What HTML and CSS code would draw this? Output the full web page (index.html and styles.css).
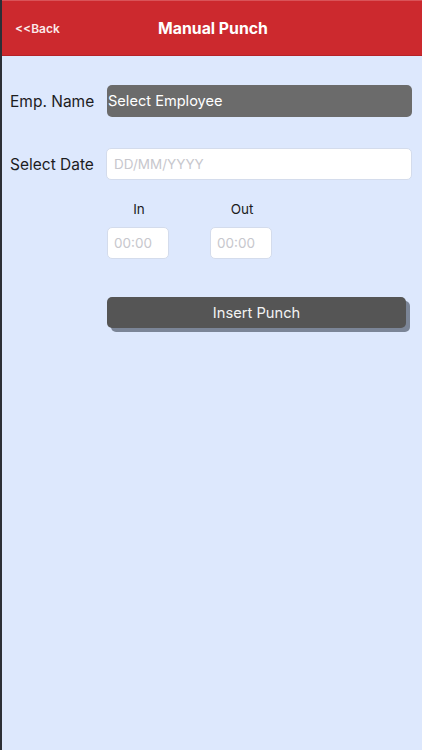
FILE: index.html
```html
<!DOCTYPE html>
<html>
<head>
<meta charset="utf-8">
<link rel="stylesheet" href="styles.css">
</head>
<body>
<div class="screen">
  <header class="bar">
    <span class="back">&lt;&lt;Back</span>
    <span class="title">Manual Punch</span>
  </header>
  <main class="form">
    <div class="row row-name">
      <span class="label">Emp. Name</span>
      <div class="select">Select Employee</div>
    </div>
    <div class="row row-date">
      <span class="label">Select Date</span>
      <div class="input">DD/MM/YYYY</div>
    </div>
    <div class="times">
      <div class="time">
        <span class="tlabel">In</span>
        <div class="tbox">00:00</div>
      </div>
      <div class="time">
        <span class="tlabel">Out</span>
        <div class="tbox">00:00</div>
      </div>
    </div>
    <div class="btnwrap">
      <div class="btn">Insert Punch</div>
    </div>
  </main>
</div>
</body>
</html>
```
FILE: styles.css
```css
html, body {
  margin: 0;
  padding: 0;
  height: 100%;
}
body {
  font-family: Inter, "Liberation Sans", Arial, sans-serif;
  background: #dde8fd;
}
.screen {
  height: 750px;
  border-left: 2px solid #2c2f36;
  background: #dde8fd;
  box-sizing: border-box;
  overflow: hidden;
}
.bar {
  height: 56px;
  background: #cc292e;
  border-top: 1px solid #d95358;
  border-bottom: 1px solid #b52227;
  box-sizing: border-box;
  display: flex;
  align-items: center;
  position: relative;
  color: #fff;
}
.back {
  margin-left: 13px;
  font-size: 12px;
  font-weight: 600;
  color: #fbe9ea;
}
.title {
  position: absolute;
  left: 0;
  right: 0;
  text-align: center;
  font-size: 15.8px;
  font-weight: 700;
  pointer-events: none;
  margin-left: 2px;
}
.form {
  padding: 29px 10px 0 8px;
}
.row {
  display: flex;
  align-items: center;
  height: 32px;
}
.row-date {
  margin-top: 31px;
}
.label {
  width: 97px;
  font-size: 15.5px;
  color: #1c1c1e;
  flex: none;
}
.select {
  flex: 1;
  height: 32px;
  background: #6b6b6b;
  border-radius: 5px;
  color: #fff;
  font-size: 14.6px;
  display: flex;
  align-items: center;
  padding-left: 1px;
  box-sizing: border-box;
}
.input {
  flex: 1;
  height: 32px;
  background: #fff;
  border: 1px solid #d4dcec;
  border-radius: 5px;
  color: #c7c7cd;
  font-size: 13.5px;
  display: flex;
  align-items: center;
  padding-left: 7px;
  box-sizing: border-box;
  margin-left: -1px;
}
.times {
  display: flex;
  gap: 41px;
  margin-left: 97px;
  margin-top: 21px;
}
.time {
  width: 62px;
  display: flex;
  flex-direction: column;
  align-items: center;
}
.tlabel {
  font-size: 13.5px;
  color: #1c1c1e;
  height: 17px;
  line-height: 17px;
  margin-left: 2px;
}
.tbox {
  margin-top: 9px;
  width: 62px;
  height: 32px;
  background: #fff;
  border: 1px solid #d4dcec;
  border-radius: 5px;
  box-sizing: border-box;
  color: #c7c7cd;
  font-size: 13.5px;
  display: flex;
  align-items: center;
  padding-left: 6px;
}
.btnwrap {
  margin-left: 97px;
  margin-top: 38px;
  padding-right: 6px;
}
.btn {
  height: 31px;
  background: #555555;
  border-radius: 5px;
  box-shadow: 4px 4px 0 #7b8597;
  color: #f2f2f2;
  font-size: 14.7px;
  display: flex;
  align-items: center;
  justify-content: center;
}
```
